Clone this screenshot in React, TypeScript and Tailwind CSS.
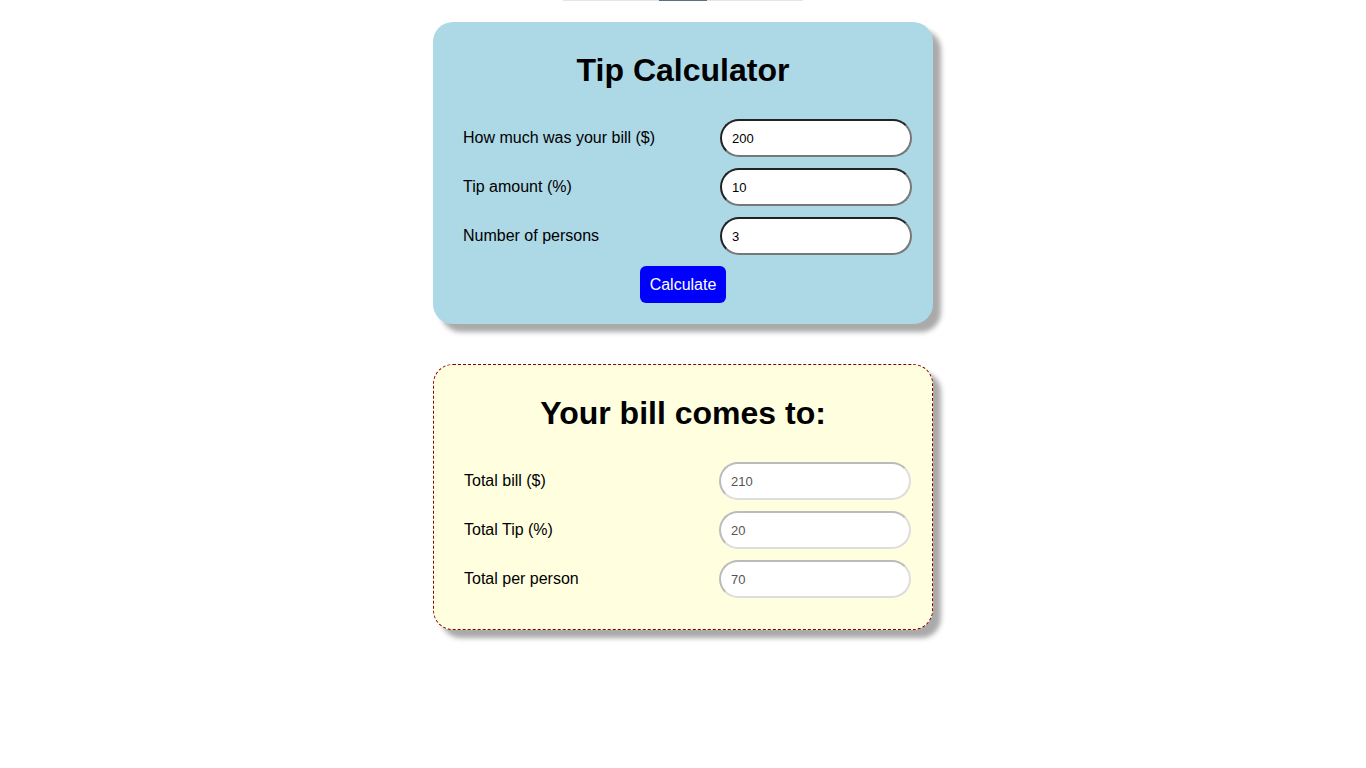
import { useState } from "react";

const fieldCls =
    "w-[192px] h-[38px] rounded-full bg-white px-[10px] text-[13px] outline-none border-2";

export default function App() {
    const [bill, setBill] = useState("200");
    const [tip, setTip] = useState("10");
    const [persons, setPersons] = useState("3");
    const [result, setResult] = useState({ total: "210", tip: "20", each: "70" });

    const calculate = () => {
        const b = parseFloat(bill) || 0;
        const t = parseFloat(tip) || 0;
        const p = parseFloat(persons) || 1;
        const tipAmount = (b * t) / 100;
        const total = b + tipAmount;
        setResult({
            total: String(total),
            tip: String(tipAmount),
            each: String(Math.round((total / p) * 100) / 100),
        });
    };

    const inputs = [
        { label: "How much was your bill ($)", value: bill, set: setBill },
        { label: "Tip amount (%)", value: tip, set: setTip },
        { label: "Number of persons", value: persons, set: setPersons },
    ];

    const outputs = [
        { label: "Total bill ($)", value: result.total },
        { label: "Total Tip (%)", value: result.tip },
        { label: "Total per person", value: result.each },
    ];

    return (
        <div className="min-h-screen bg-white font-['Liberation_Sans',Arial,sans-serif] text-black">
            {/* thin strip at the top */}
            <div className="mx-auto flex h-px w-[240px] bg-[#e5e5e5]">
                <div className="ml-[96px] w-[48px] bg-[#5f7080]" />
            </div>

            {/* Calculator card */}
            <div className="mx-auto mt-[21px] w-[500px] rounded-[20px] bg-[#add8e6] pt-[30px] pb-[21px] shadow-[8px_8px_5px_#aaa]">
                <h1 className="text-center text-[32px] font-bold leading-[37px]">Tip Calculator</h1>
                <div className="mt-[30px] flex flex-col gap-[11px] pl-[30px] pr-[21px]">
                    {inputs.map((f) => (
                        <div key={f.label} className="flex items-center justify-between">
                            <label className="text-[16px]">{f.label}</label>
                            <input
                                type="text"
                                value={f.value}
                                onChange={(e) => f.set(e.target.value)}
                                className={`${fieldCls} border-t-[#222] border-l-[#222] border-b-[#777] border-r-[#777] text-black`}
                            />
                        </div>
                    ))}
                    <div className="flex justify-center pr-[9px]">
                        <button
                            onClick={calculate}
                            className="h-[37px] rounded-[6px] bg-[#0000ff] px-[10px] text-[16px] text-white"
                        >
                            Calculate
                        </button>
                    </div>
                </div>
            </div>

            {/* Result card */}
            <div className="mx-auto mt-[40px] w-[500px] rounded-[20px] border border-dashed border-[#8b0000] bg-[#ffffe0] pt-[30px] pb-[31px] shadow-[8px_8px_5px_#aaa]">
                <h1 className="text-center text-[32px] font-bold leading-[37px]">Your bill comes to:</h1>
                <div className="mt-[30px] flex flex-col gap-[11px] pl-[30px] pr-[21px]">
                    {outputs.map((f) => (
                        <div key={f.label} className="flex items-center justify-between">
                            <label className="text-[16px]">{f.label}</label>
                            <input
                                type="text"
                                readOnly
                                value={f.value}
                                className={`${fieldCls} border-t-[#bbb] border-l-[#bbb] border-b-[#ddd] border-r-[#ddd] text-[#555]`}
                            />
                        </div>
                    ))}
                </div>
            </div>
        </div>
    );
}
